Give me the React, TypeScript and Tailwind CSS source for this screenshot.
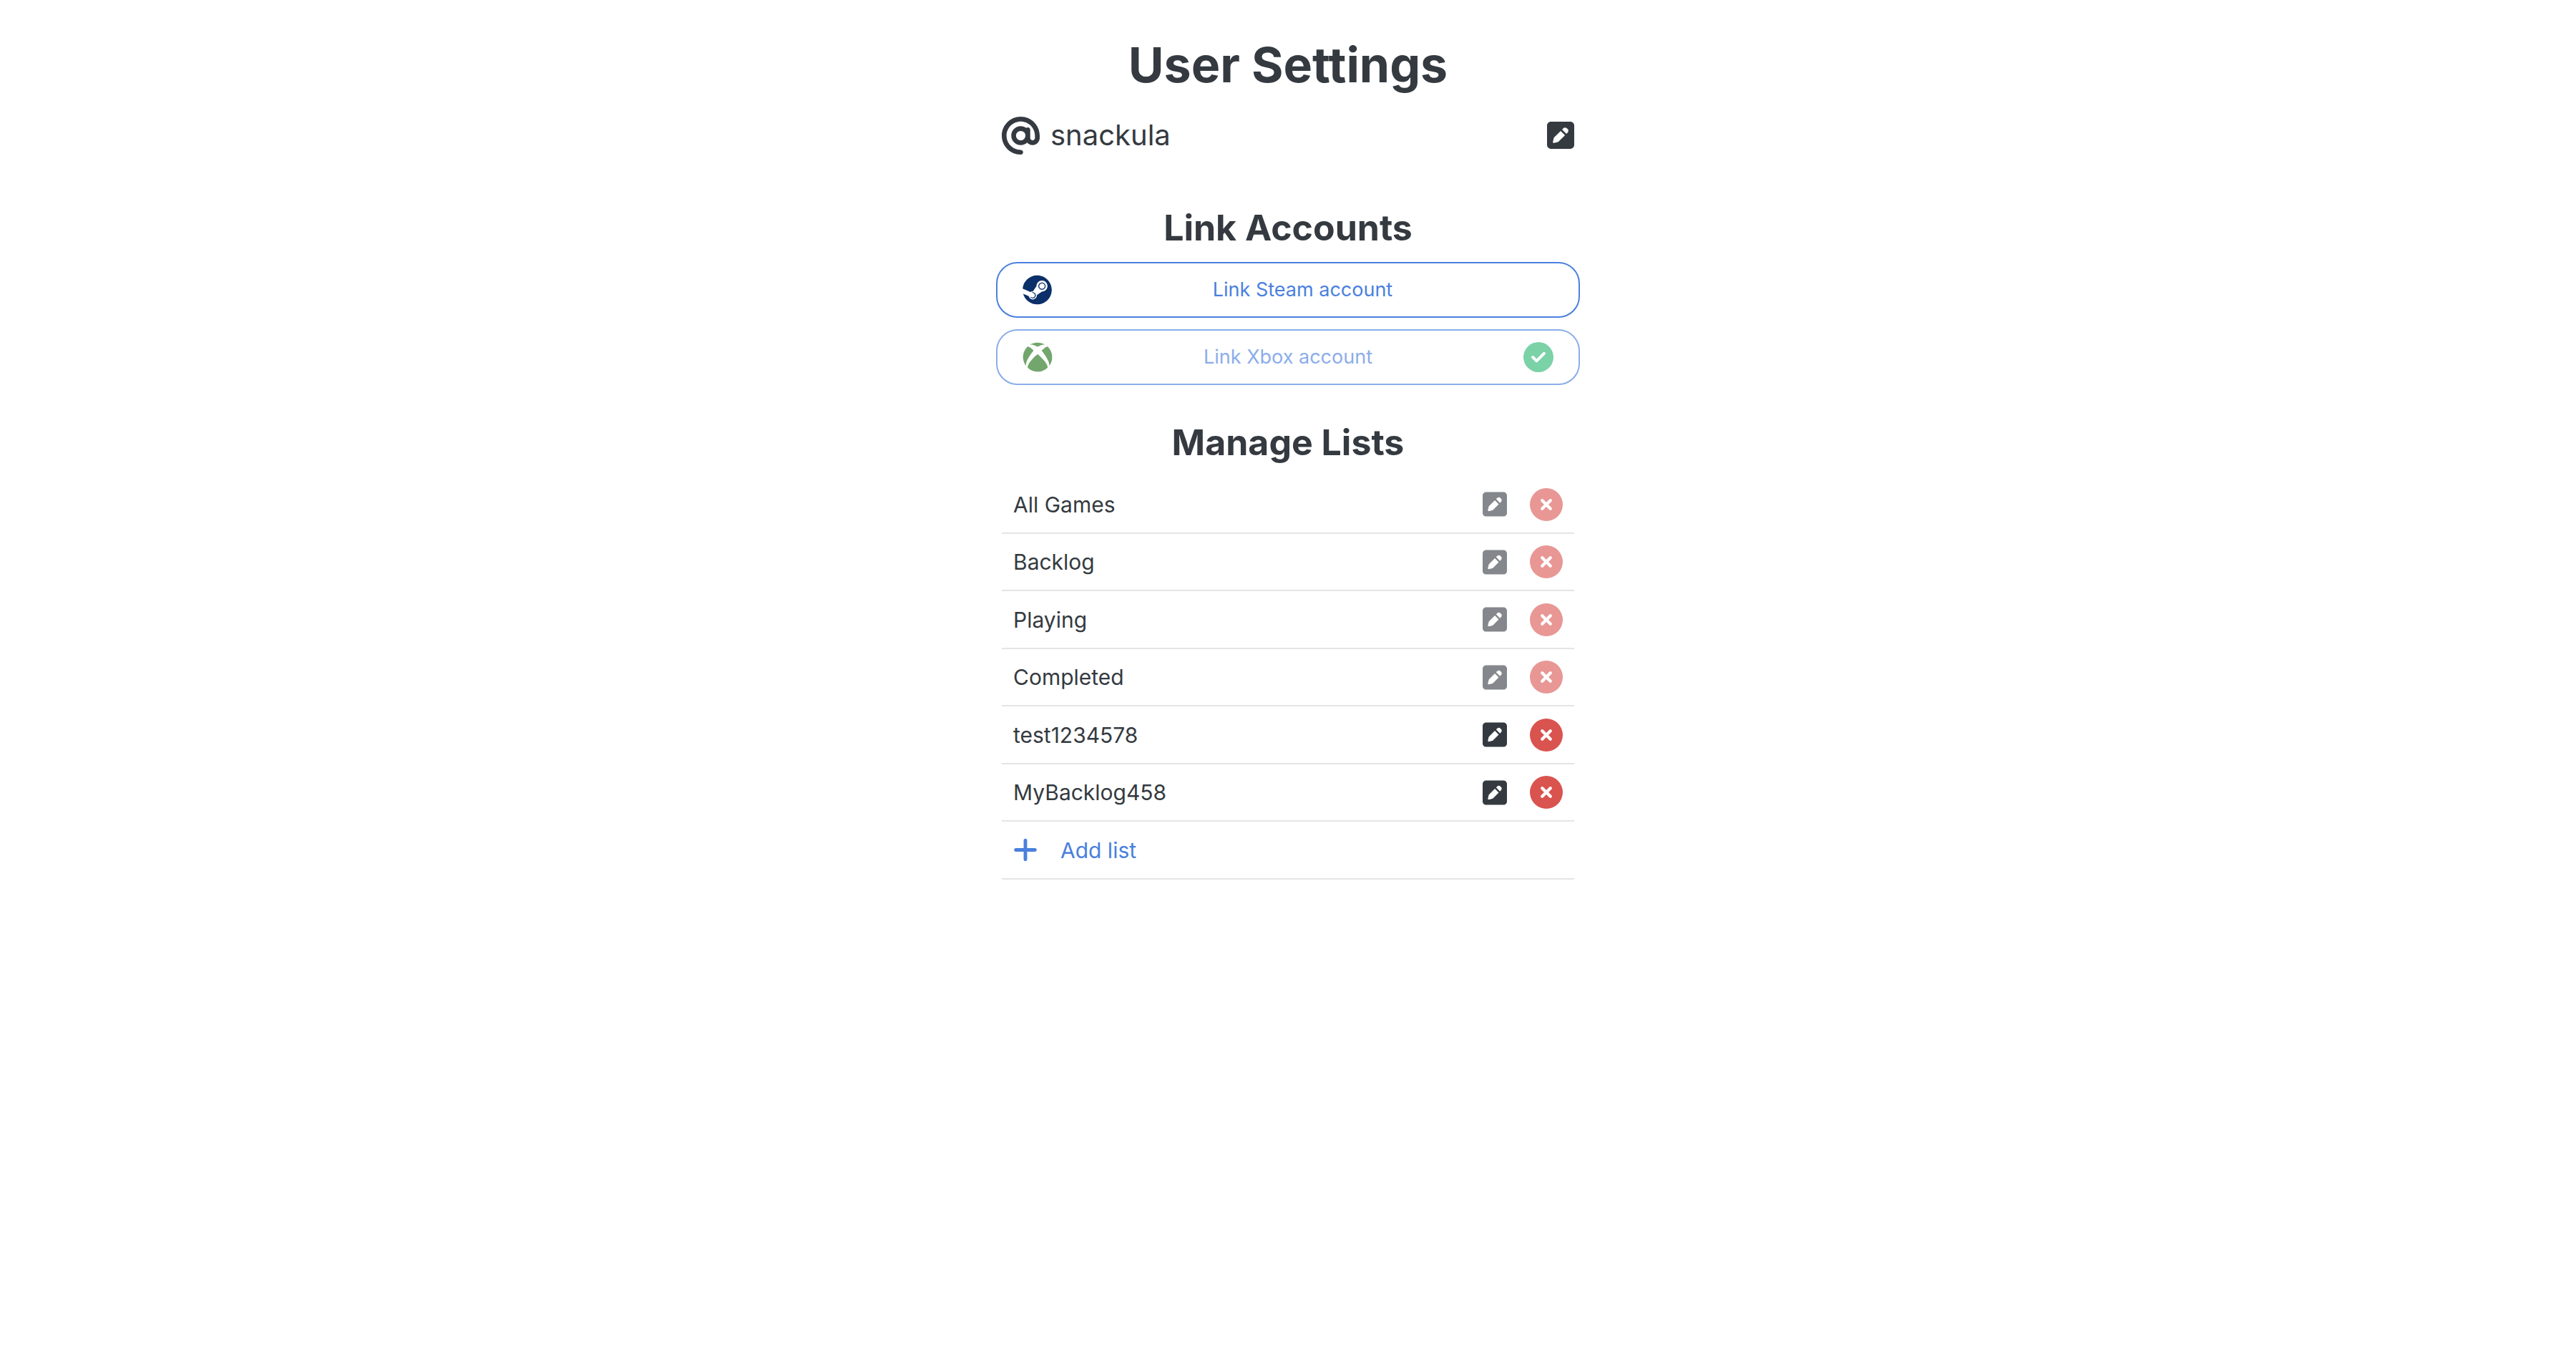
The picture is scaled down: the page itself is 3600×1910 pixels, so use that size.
import { useState } from "react";
import {
  FaAt,
  FaCircleCheck,
  FaCircleXmark,
  FaPlus,
  FaSquarePen,
  FaSteam,
  FaXbox,
} from "react-icons/fa6";

type GameList = { name: string; locked: boolean };

const initialLists: GameList[] = [
  { name: "All Games", locked: true },
  { name: "Backlog", locked: true },
  { name: "Playing", locked: true },
  { name: "Completed", locked: true },
  { name: "test1234578", locked: false },
  { name: "MyBacklog458", locked: false },
];

function SectionTitle({ children }: { children: string }) {
  return (
    <h2 className="text-center text-[50px] leading-[62px] font-bold">{children}</h2>
  );
}

function ListRow({ list, onDelete }: { list: GameList; onDelete: () => void }) {
  return (
    <li className="flex h-20 items-center gap-8 border-b-2 border-[#e5e5e5] px-4 odd:h-[81px]">
      <span className="flex-1">{list.name}</span>
      <button
        type="button"
        disabled={list.locked}
        aria-label={`Rename ${list.name}`}
        className="disabled:opacity-60"
      >
        <FaSquarePen className="h-[39px] w-[34px]" />
      </button>
      <button
        type="button"
        disabled={list.locked}
        aria-label={`Delete ${list.name}`}
        onClick={onDelete}
        className="text-[#d9534f] disabled:opacity-60"
      >
        <FaCircleXmark className="size-[46px]" />
      </button>
    </li>
  );
}

export default function App() {
  const [lists, setLists] = useState(initialLists);
  const remove = (name: string) => setLists(lists.filter((l) => l.name !== name));

  return (
    <main className="mx-auto max-w-[816px] pt-[50px] pb-16 font-['Inter',sans-serif] text-[30px] leading-10 text-[#343a40]">
      <h1 className="text-center text-[68px] leading-[80px] font-bold">User Settings</h1>

      <div className="mt-8 flex items-center gap-[15px] px-2">
        <FaAt className="size-[53px]" />
        <span className="flex-1 text-[40px] leading-[54px]">snackula</span>
        <button type="button" aria-label="Edit username">
          <FaSquarePen className="h-11 w-[38px]" />
        </button>
      </div>

      <section className="mt-[71px]">
        <SectionTitle>Link Accounts</SectionTitle>
        <div className="mt-[17px] flex flex-col gap-4 text-[27px] text-[#4a80de]">
          <button
            type="button"
            className="flex h-[78px] items-center rounded-[30px] border-2 border-[#4a80de] px-[35px]"
          >
            <FaSteam className="h-[42px] w-[41px] text-[#0b2f69]" />
            <span className="flex-1">Link Steam account</span>
          </button>
          <button
            type="button"
            disabled
            className="flex h-[78px] items-center rounded-[30px] border-2 border-[#8badea] px-[35px] text-[#8badea]"
          >
            <FaXbox className="size-[42px] text-[#72a66c]" />
            <span className="flex-1">Link Xbox account</span>
            <FaCircleCheck className="size-[42px] text-[#7bd2a7]" />
          </button>
        </div>
      </section>

      <section className="mt-[49px]">
        <SectionTitle>Manage Lists</SectionTitle>
        <ul className="mt-4 px-2">
          {lists.map((list) => (
            <ListRow key={list.name} list={list} onDelete={() => remove(list.name)} />
          ))}
          <li className="flex h-[81px] items-center border-b-2 border-[#e5e5e5] px-4">
            <button type="button" className="flex items-center gap-8 text-[#4a80de]">
              <FaPlus className="h-[39px] w-[34px]" />
              Add list
            </button>
          </li>
        </ul>
      </section>
    </main>
  );
}
